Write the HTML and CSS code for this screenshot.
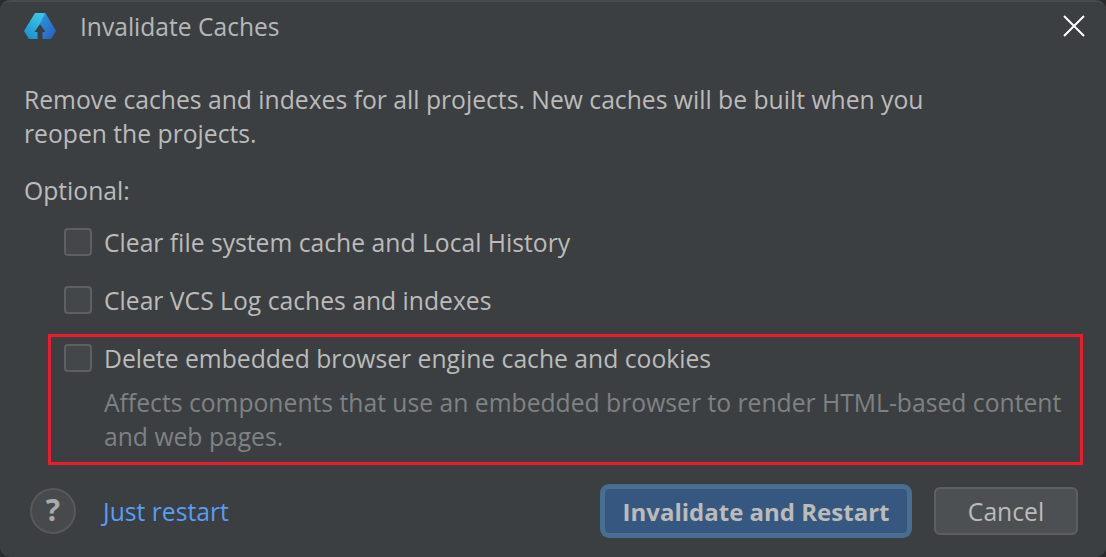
FILE: index.html
```html
<!DOCTYPE html>
<html lang="en">
<head>
    <meta charset="UTF-8">
    <title>Invalidate Caches</title>
    <link rel="stylesheet" href="styles.css">
</head>
<body>
    <div class="dialog">
        <div class="titlebar">
            <svg class="logo" width="32" height="26" viewBox="0 0 32 26">
                <defs>
                    <linearGradient id="logoLeft" x1="0.7" y1="0" x2="0.2" y2="1">
                        <stop offset="0" stop-color="#3cc6e6"/>
                        <stop offset="1" stop-color="#1d8fd0"/>
                    </linearGradient>
                    <linearGradient id="logoRight" x1="0.2" y1="0" x2="0.9" y2="1">
                        <stop offset="0" stop-color="#2a93dc"/>
                        <stop offset="1" stop-color="#2c5fc0"/>
                    </linearGradient>
                </defs>
                <path d="M18 0H21.500L32 18L27 26H18.500V19H21.500L16 11Z" fill="url(#logoRight)"/>
                <path d="M11 0H21L16 11L10.500 19H13.500V26H5L0 18Z" fill="url(#logoLeft)"/>
            </svg>
            <span class="title">Invalidate Caches</span>
            <svg class="close" width="22" height="22" viewBox="0 0 22 22">
                <path d="M1 1L21 21M21 1L1 21" stroke="#ffffff" stroke-width="2"/>
            </svg>
        </div>

        <div class="content">
            <p class="intro">Remove caches and indexes for all projects. New caches will be built when you<br>reopen the projects.</p>
            <p class="optional">Optional:</p>

            <label class="option">
                <span class="box"></span>
                <span>Clear file system cache and Local History</span>
            </label>
            <label class="option">
                <span class="box"></span>
                <span>Clear VCS Log caches and indexes</span>
            </label>

            <div class="highlight">
                <label class="option">
                    <span class="box"></span>
                    <span>Delete embedded browser engine cache and cookies</span>
                </label>
                <p class="hint">Affects components that use an embedded browser to render HTML-based content<br>and web pages.</p>
            </div>
        </div>

        <div class="footer">
            <span class="help">?</span>
            <a class="link">Just restart</a>
            <button class="btn primary">Invalidate and Restart</button>
            <button class="btn">Cancel</button>
        </div>
    </div>
</body>
</html>
```

FILE: styles.css
```css
html, body {
    margin: 0;
    height: 100%;
    background-color: #2b2b2b;
}

body {
    font-family: "Open Sans", sans-serif;
    font-size: 24.7px;
    color: #bbbbbb;
    overflow: hidden;
}

.dialog {
    height: 557px;
    background-color: #3c3f41;
    box-sizing: border-box;
    border-top: 2px solid #4a4a4a;
    border-radius: 10px;
}

.titlebar {
    display: flex;
    align-items: center;
    height: 48px;
    padding: 0 21px 0 24px;
}

.logo {
    margin-right: 24px;
}

.title {
    flex: 1;
    font-size: 24.6px;
    color: #b4b8bb;
}

.content {
    padding: 0 23px 0 24px;
}

.intro {
    margin: 33px 0 0;
    line-height: 34px;
}

.optional {
    margin: 23px 0 0;
    line-height: 34px;
}

.option {
    display: flex;
    align-items: center;
    gap: 12px;
    height: 34px;
    margin: 17px 0 0 40px;
}

.option + .option {
    margin-top: 24px;
}

.box {
    width: 28px;
    height: 28px;
    box-sizing: border-box;
    border: 2px solid #5e6060;
    border-radius: 4px;
    background-color: #43474a;
}

.highlight {
    margin: 17px 0 0 24px;
    height: 131px;
    box-sizing: border-box;
    border: 3px solid #ed1c2b;
    padding: 4px 0 0 13px;
}

.highlight .option {
    margin: 0;
}

.hint {
    margin: 11px 0 0 40px;
    line-height: 34px;
    color: #7f8284;
}

.footer {
    display: flex;
    align-items: center;
    padding: 22px 28px 0 30px;
}

.help {
    width: 46px;
    height: 46px;
    box-sizing: border-box;
    border: 2px solid #565859;
    border-radius: 50%;
    background-color: #474a4c;
    color: #aaaaaa;
    font-weight: 700;
    text-align: center;
    line-height: 40px;
    font-size: 30px;
}

.link {
    margin-left: 27px;
    color: #589df6;
    flex: 1;
}

.btn {
    font-family: inherit;
    font-size: 24.7px;
    color: #bbbbbb;
    height: 48px;
    width: 144px;
    margin-left: 25px;
    padding: 0;
    background-color: #4c5052;
    border: 2px solid #5e6060;
    border-radius: 6px;
}

.primary {
    width: 306px;
    height: 48px;
    font-size: 24px;
    font-weight: 700;
    background-color: #365880;
    border: 2px solid #4c708c;
    box-shadow: 0 0 0 3px #466d94;
}
```
